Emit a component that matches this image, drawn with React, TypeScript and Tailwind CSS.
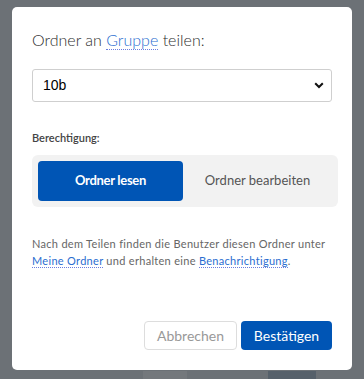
import React from "react";

export default function App() {
  const font = { fontFamily: "Lato, 'Noto Sans', sans-serif" };
  return (
    <div className="w-[364px] h-[379px] bg-[#6c7176] overflow-hidden relative" style={font}>
      <div className="absolute left-[143px] top-[371px] w-[44px] h-[8px] bg-[#74787c]" />
      <div className="absolute left-[268px] top-[371px] w-[48px] h-[8px] bg-[#56606a]" />
      <div className="absolute left-[12px] top-[7px] w-[340px] h-[363px] bg-white rounded-[5px] flex flex-col px-[20px]">
        <div className="mt-[23px] text-[16px] leading-[20px] text-[#2e2e2e] font-light">
          Ordner an{" "}
          <span className="text-[#2a6dd0] border-b border-dotted border-[#6a7ee0]">Gruppe</span>{" "}
          teilen:
        </div>
        <div className="mt-[19px] h-[33px] w-[300px] border border-[#cfcfcf] rounded-[3px] flex items-center justify-between pl-[10px] pr-[7px]">
          <span className="text-[14px] text-black" style={{ fontFamily: "'Liberation Sans', Arial, sans-serif" }}>10b</span>
          <svg width="10" height="7" viewBox="0 0 10 7">
            <path d="M1.2 1.2 L5 5 L8.8 1.2" fill="none" stroke="#111" strokeWidth="2" />
          </svg>
        </div>
        <div className="mt-[29px] text-[11px] leading-[14px] font-semibold text-[#444]">Berechtigung:</div>
        <div className="mt-[10px] w-[306px] h-[52px] bg-[#f2f2f2] rounded-[6px] flex items-center p-[6px]">
          <div className="w-[145px] h-[40px] bg-[#0055b5] rounded-[4px] flex items-center justify-center text-white text-[13px] font-bold tracking-[-0.3px]">
            Ordner lesen
          </div>
          <div className="flex-1 h-[40px] flex items-center justify-center text-[#555] text-[13px]">
            Ordner bearbeiten
          </div>
        </div>
        <div className="mt-[28px] text-[11px] leading-[17px] text-[#666] tracking-[0.3px]">
          Nach dem Teilen finden die Benutzer diesen Ordner unter{" "}
          <span className="text-[#2a6dd0] border-b border-dotted border-[#6a7ee0]">Meine Ordner</span> und erhalten eine{" "}
          <span className="text-[#2a6dd0] border-b border-dotted border-[#6a7ee0]">Benachrichtigung</span>.
        </div>
        <div className="mt-auto mb-[20px] flex justify-end gap-[4px]">
          <div className="w-[93px] h-[29px] border border-[#ddd] rounded-[4px] flex items-center justify-center text-[14px] text-[#999]">
            Abbrechen
          </div>
          <div className="w-[91px] h-[29px] bg-[#0055b5] rounded-[4px] flex items-center justify-center text-[14px] text-white">
            Bestätigen
          </div>
        </div>
      </div>
    </div>
  );
}
